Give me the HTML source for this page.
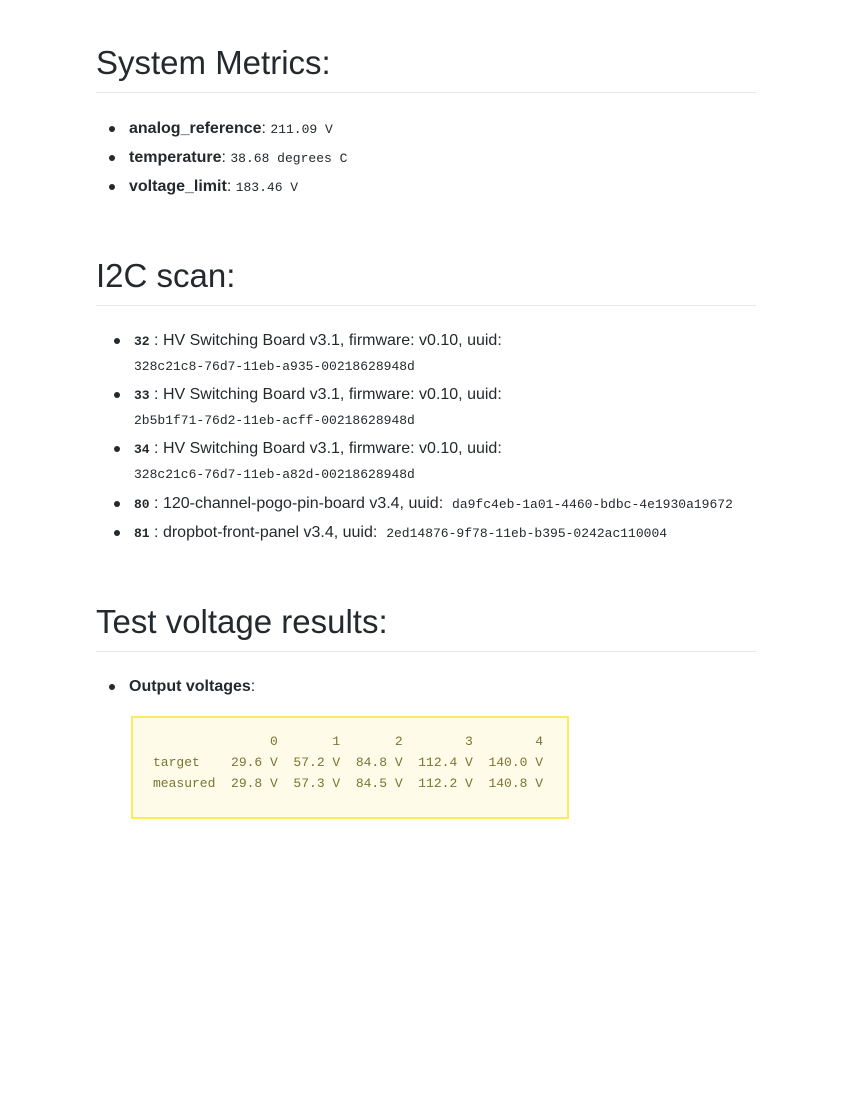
<!DOCTYPE html>
<html><head><meta charset="utf-8"><style>
body{margin:0;width:850px;height:1100px;background:#fff;color:#24292e;font-family:"Liberation Sans",sans-serif;position:relative}
h1{position:absolute;left:96px;margin:0;font-weight:500;font-size:33px;line-height:40px;color:#24292e}
.hr{position:absolute;left:96px;width:660px;height:1px;background:#e6e8ea}
.li{position:absolute;left:129px;font-size:16px;line-height:20px;white-space:nowrap}
.li:before{content:"";position:absolute;left:-20px;top:7px;width:6px;height:6px;border-radius:50%;background:#24292e}
.m{font-family:"Liberation Mono",monospace;font-size:13px}
.m2{font-family:"Liberation Mono",monospace;font-size:13px;position:absolute;left:134px;white-space:nowrap}
b{font-weight:bold}
.box{position:absolute;left:131px;top:716px;width:434px;height:99px;border:2px solid #fbec5d;background:#fefbe8}
pre{position:absolute;left:153px;top:731px;margin:0;font-family:"Liberation Mono",monospace;font-size:13px;line-height:21px;color:#7a7433}
</style></head><body>
<h1 style="top:43px">System Metrics:</h1><div class="hr" style="top:92px"></div>
<div class="li" style="top:119px"><b>analog_reference</b>: <span class="m">211.09 V</span></div>
<div class="li" style="top:148px"><b>temperature</b>: <span class="m">38.68 degrees C</span></div>
<div class="li" style="top:177px"><b>voltage_limit</b>: <span class="m">183.46 V</span></div>
<h1 style="top:256px">I2C scan:</h1><div class="hr" style="top:305px"></div>
<div class="li" style="top:331px;left:134px"><b class="m">32</b> : HV Switching Board v3.1, firmware: v0.10, uuid:</div>
<div class="m2" style="top:359px">328c21c8-76d7-11eb-a935-00218628948d</div>
<div class="li" style="top:385px;left:134px"><b class="m">33</b> : HV Switching Board v3.1, firmware: v0.10, uuid:</div>
<div class="m2" style="top:413px">2b5b1f71-76d2-11eb-acff-00218628948d</div>
<div class="li" style="top:439px;left:134px"><b class="m">34</b> : HV Switching Board v3.1, firmware: v0.10, uuid:</div>
<div class="m2" style="top:467px">328c21c6-76d7-11eb-a82d-00218628948d</div>
<div class="li" style="top:494px;left:134px"><b class="m">80</b> : 120-channel-pogo-pin-board v3.4, uuid: &nbsp;<span class="m">da9fc4eb-1a01-4460-bdbc-4e1930a19672</span></div>
<div class="li" style="top:523px;left:134px"><b class="m">81</b> : dropbot-front-panel v3.4, uuid: &nbsp;<span class="m">2ed14876-9f78-11eb-b395-0242ac110004</span></div>
<h1 style="top:602px">Test voltage results:</h1><div class="hr" style="top:651px"></div>
<div class="li" style="top:677px"><b>Output voltages</b>:</div>
<div class="box"></div>
<pre>               0       1       2        3        4
target    29.6 V  57.2 V  84.8 V  112.4 V  140.0 V
measured  29.8 V  57.3 V  84.5 V  112.2 V  140.8 V</pre>
</body></html>
